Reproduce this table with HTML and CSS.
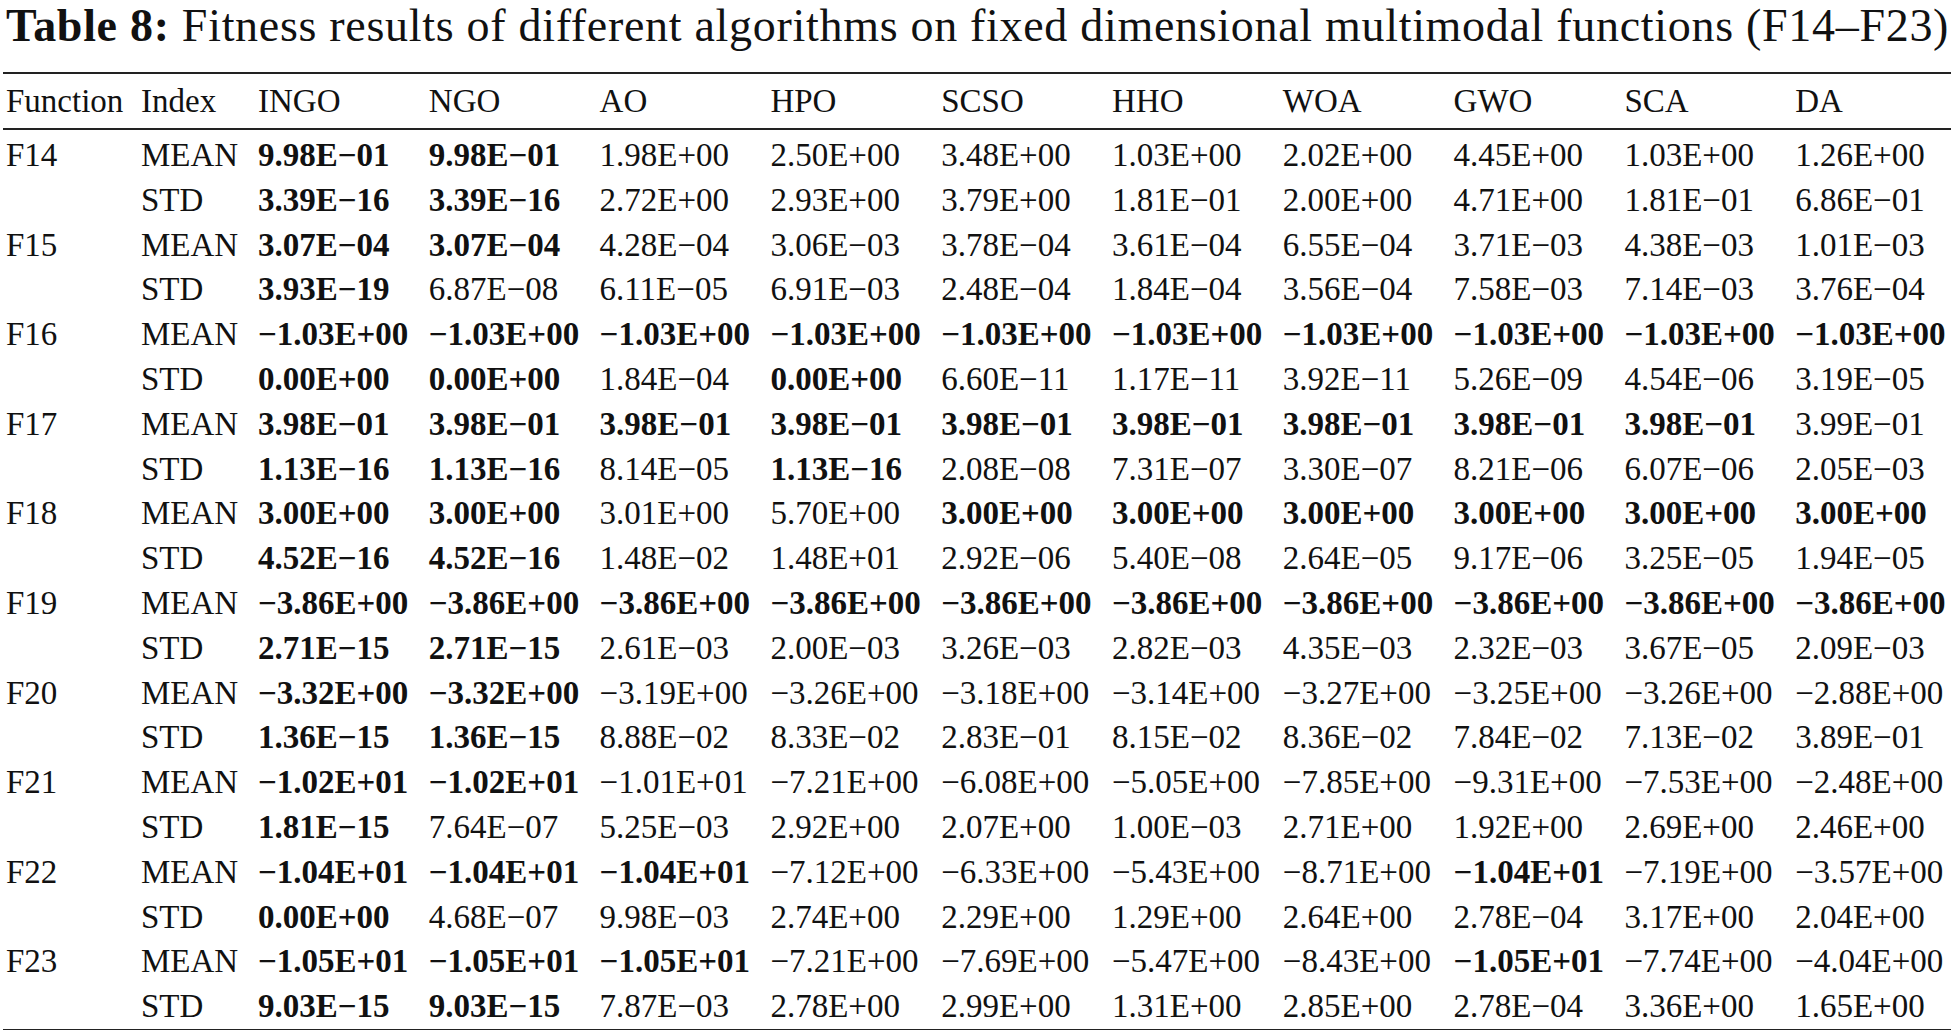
FILE: index.html
```html
<!DOCTYPE html>
<html>
<head>
<meta charset="utf-8">
<link rel="stylesheet" href="styles.css">
</head>
<body>
<div class="page">
<div class="caption"><span class="cap-label">Table 8:</span> Fitness results of different algorithms on fixed dimensional multimodal functions (F14–F23)</div>
<table class="results">
<colgroup>
<col class="c-fn"><col class="c-ix"><col class="c-v"><col class="c-v"><col class="c-v"><col class="c-v"><col class="c-v"><col class="c-v"><col class="c-v"><col class="c-v"><col class="c-v"><col class="c-last">
</colgroup>
<thead>
<tr><th>Function</th><th>Index</th><th>INGO</th><th>NGO</th><th>AO</th><th>HPO</th><th>SCSO</th><th>HHO</th><th>WOA</th><th>GWO</th><th>SCA</th><th>DA</th></tr>
</thead>
<tbody>
<tr class="first"><td>F14</td><td>MEAN</td><td class="b">9.98E−01</td><td class="b">9.98E−01</td><td>1.98E+00</td><td>2.50E+00</td><td>3.48E+00</td><td>1.03E+00</td><td>2.02E+00</td><td>4.45E+00</td><td>1.03E+00</td><td>1.26E+00</td></tr>
<tr><td></td><td>STD</td><td class="b">3.39E−16</td><td class="b">3.39E−16</td><td>2.72E+00</td><td>2.93E+00</td><td>3.79E+00</td><td>1.81E−01</td><td>2.00E+00</td><td>4.71E+00</td><td>1.81E−01</td><td>6.86E−01</td></tr>
<tr><td>F15</td><td>MEAN</td><td class="b">3.07E−04</td><td class="b">3.07E−04</td><td>4.28E−04</td><td>3.06E−03</td><td>3.78E−04</td><td>3.61E−04</td><td>6.55E−04</td><td>3.71E−03</td><td>4.38E−03</td><td>1.01E−03</td></tr>
<tr><td></td><td>STD</td><td class="b">3.93E−19</td><td>6.87E−08</td><td>6.11E−05</td><td>6.91E−03</td><td>2.48E−04</td><td>1.84E−04</td><td>3.56E−04</td><td>7.58E−03</td><td>7.14E−03</td><td>3.76E−04</td></tr>
<tr><td>F16</td><td>MEAN</td><td class="b">−1.03E+00</td><td class="b">−1.03E+00</td><td class="b">−1.03E+00</td><td class="b">−1.03E+00</td><td class="b">−1.03E+00</td><td class="b">−1.03E+00</td><td class="b">−1.03E+00</td><td class="b">−1.03E+00</td><td class="b">−1.03E+00</td><td class="b">−1.03E+00</td></tr>
<tr><td></td><td>STD</td><td class="b">0.00E+00</td><td class="b">0.00E+00</td><td>1.84E−04</td><td class="b">0.00E+00</td><td>6.60E−11</td><td>1.17E−11</td><td>3.92E−11</td><td>5.26E−09</td><td>4.54E−06</td><td>3.19E−05</td></tr>
<tr><td>F17</td><td>MEAN</td><td class="b">3.98E−01</td><td class="b">3.98E−01</td><td class="b">3.98E−01</td><td class="b">3.98E−01</td><td class="b">3.98E−01</td><td class="b">3.98E−01</td><td class="b">3.98E−01</td><td class="b">3.98E−01</td><td class="b">3.98E−01</td><td>3.99E−01</td></tr>
<tr><td></td><td>STD</td><td class="b">1.13E−16</td><td class="b">1.13E−16</td><td>8.14E−05</td><td class="b">1.13E−16</td><td>2.08E−08</td><td>7.31E−07</td><td>3.30E−07</td><td>8.21E−06</td><td>6.07E−06</td><td>2.05E−03</td></tr>
<tr><td>F18</td><td>MEAN</td><td class="b">3.00E+00</td><td class="b">3.00E+00</td><td>3.01E+00</td><td>5.70E+00</td><td class="b">3.00E+00</td><td class="b">3.00E+00</td><td class="b">3.00E+00</td><td class="b">3.00E+00</td><td class="b">3.00E+00</td><td class="b">3.00E+00</td></tr>
<tr><td></td><td>STD</td><td class="b">4.52E−16</td><td class="b">4.52E−16</td><td>1.48E−02</td><td>1.48E+01</td><td>2.92E−06</td><td>5.40E−08</td><td>2.64E−05</td><td>9.17E−06</td><td>3.25E−05</td><td>1.94E−05</td></tr>
<tr><td>F19</td><td>MEAN</td><td class="b">−3.86E+00</td><td class="b">−3.86E+00</td><td class="b">−3.86E+00</td><td class="b">−3.86E+00</td><td class="b">−3.86E+00</td><td class="b">−3.86E+00</td><td class="b">−3.86E+00</td><td class="b">−3.86E+00</td><td class="b">−3.86E+00</td><td class="b">−3.86E+00</td></tr>
<tr><td></td><td>STD</td><td class="b">2.71E−15</td><td class="b">2.71E−15</td><td>2.61E−03</td><td>2.00E−03</td><td>3.26E−03</td><td>2.82E−03</td><td>4.35E−03</td><td>2.32E−03</td><td>3.67E−05</td><td>2.09E−03</td></tr>
<tr><td>F20</td><td>MEAN</td><td class="b">−3.32E+00</td><td class="b">−3.32E+00</td><td>−3.19E+00</td><td>−3.26E+00</td><td>−3.18E+00</td><td>−3.14E+00</td><td>−3.27E+00</td><td>−3.25E+00</td><td>−3.26E+00</td><td>−2.88E+00</td></tr>
<tr><td></td><td>STD</td><td class="b">1.36E−15</td><td class="b">1.36E−15</td><td>8.88E−02</td><td>8.33E−02</td><td>2.83E−01</td><td>8.15E−02</td><td>8.36E−02</td><td>7.84E−02</td><td>7.13E−02</td><td>3.89E−01</td></tr>
<tr><td>F21</td><td>MEAN</td><td class="b">−1.02E+01</td><td class="b">−1.02E+01</td><td>−1.01E+01</td><td>−7.21E+00</td><td>−6.08E+00</td><td>−5.05E+00</td><td>−7.85E+00</td><td>−9.31E+00</td><td>−7.53E+00</td><td>−2.48E+00</td></tr>
<tr><td></td><td>STD</td><td class="b">1.81E−15</td><td>7.64E−07</td><td>5.25E−03</td><td>2.92E+00</td><td>2.07E+00</td><td>1.00E−03</td><td>2.71E+00</td><td>1.92E+00</td><td>2.69E+00</td><td>2.46E+00</td></tr>
<tr><td>F22</td><td>MEAN</td><td class="b">−1.04E+01</td><td class="b">−1.04E+01</td><td class="b">−1.04E+01</td><td>−7.12E+00</td><td>−6.33E+00</td><td>−5.43E+00</td><td>−8.71E+00</td><td class="b">−1.04E+01</td><td>−7.19E+00</td><td>−3.57E+00</td></tr>
<tr><td></td><td>STD</td><td class="b">0.00E+00</td><td>4.68E−07</td><td>9.98E−03</td><td>2.74E+00</td><td>2.29E+00</td><td>1.29E+00</td><td>2.64E+00</td><td>2.78E−04</td><td>3.17E+00</td><td>2.04E+00</td></tr>
<tr><td>F23</td><td>MEAN</td><td class="b">−1.05E+01</td><td class="b">−1.05E+01</td><td class="b">−1.05E+01</td><td>−7.21E+00</td><td>−7.69E+00</td><td>−5.47E+00</td><td>−8.43E+00</td><td class="b">−1.05E+01</td><td>−7.74E+00</td><td>−4.04E+00</td></tr>
<tr class="last"><td></td><td>STD</td><td class="b">9.03E−15</td><td class="b">9.03E−15</td><td>7.87E−03</td><td>2.78E+00</td><td>2.99E+00</td><td>1.31E+00</td><td>2.85E+00</td><td>2.78E−04</td><td>3.36E+00</td><td>1.65E+00</td></tr>
</tbody>
</table>
</div>
</body>
</html>
```

FILE: styles.css
```css
html, body {
  margin: 0;
  padding: 0;
  background: #ffffff;
}

.page {
  padding: 0 0 0 3px;
  color: #111111;
  font-family: "Liberation Serif", "Times New Roman", serif;
}

.caption {
  font-size: 46px;
  line-height: 51px;
  letter-spacing: 0.7px;
  padding: 0 0 0 3px;
  white-space: nowrap;
  height: 72px;
}

.cap-label {
  font-weight: bold;
}

.results {
  border-collapse: collapse;
  table-layout: fixed;
  width: 1948px;
  font-size: 33px;
  border-top: 2px solid #222;
  border-bottom: 2px solid #222;
}

.c-fn { width: 135px; }
.c-ix { width: 117px; }
.c-v { width: 170.8px; }
.c-last { width: auto; }

.results th,
.results td {
  text-align: left;
  font-weight: normal;
  padding: 0 0 0 3px;
  white-space: nowrap;
  height: 44.8px;
  line-height: 44.8px;
}

.results thead th {
  height: 54px;
  border-bottom: 2px solid #222;
}

.results tr.first td {
  height: 47.8px;
  vertical-align: bottom;
}

.results tr.last td {
  height: 41.5px;
  vertical-align: top;
}

.results td.b {
  font-weight: bold;
}
```
